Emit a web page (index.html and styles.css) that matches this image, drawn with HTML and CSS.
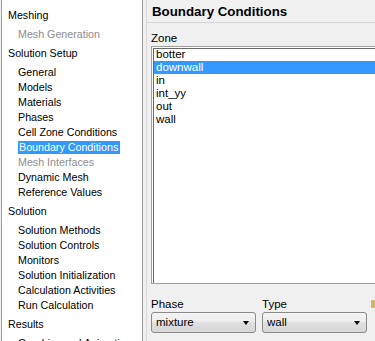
FILE: index.html
```html
<!DOCTYPE html>
<html lang="en">
<head>
    <meta charset="UTF-8">
    <meta name="viewport" content="width=device-width, initial-scale=1.0">
    <title>Boundary Conditions</title>
    <link rel="stylesheet" href="styles.css">
</head>
<body>
    <!-- Navigation tree -->
    <div class="nav">
        <div class="group">Meshing</div>
        <div class="item disabled">Mesh Generation</div>
        <div class="group">Solution Setup</div>
        <div class="item">General</div>
        <div class="item">Models</div>
        <div class="item">Materials</div>
        <div class="item">Phases</div>
        <div class="item">Cell Zone Conditions</div>
        <div class="item"><span class="selected">Boundary Conditions</span></div>
        <div class="item disabled">Mesh Interfaces</div>
        <div class="item">Dynamic Mesh</div>
        <div class="item">Reference Values</div>
        <div class="group">Solution</div>
        <div class="item">Solution Methods</div>
        <div class="item">Solution Controls</div>
        <div class="item">Monitors</div>
        <div class="item">Solution Initialization</div>
        <div class="item">Calculation Activities</div>
        <div class="item">Run Calculation</div>
        <div class="group">Results</div>
        <div class="item">Graphics and Animations</div>
    </div>

    <!-- Task page -->
    <div class="panel">
        <div class="panel-title">Boundary Conditions</div>
        <div class="panel-body">
            <div class="label">Zone</div>
            <div class="listbox">
                <div class="option">botter</div>
                <div class="option active">downwall</div>
                <div class="option">in</div>
                <div class="option">int_yy</div>
                <div class="option">out</div>
                <div class="option">wall</div>
            </div>
            <div class="fields">
                <div class="field">
                    <div class="label">Phase</div>
                    <div class="combo">mixture<span class="arrow"></span></div>
                </div>
                <div class="field">
                    <div class="label">Type</div>
                    <div class="combo">wall<span class="arrow"></span></div>
                </div>
                <div class="edge-icon"></div>
            </div>
        </div>
    </div>
</body>
</html>
```

FILE: styles.css
```css
body {
    margin: 0;
    padding: 0 0 0 1px;
    height: 341px;
    overflow: hidden;
    display: flex;
    background: #f0f0f0;
    font-family: "Liberation Sans", Arial, sans-serif;
    color: #000;
}
.nav {
    flex: 0 0 140px;
    background: #fff;
    border-left: 1px solid #a0a0a0;
    border-right: 1px solid #a0a0a0;
    padding-top: 4px;
    font-size: 10.7px;
    line-height: 15px;
    white-space: nowrap;
    overflow: hidden;
}
.group {
    padding: 4px 0 4px 6px;
}
.item {
    padding-left: 16px;
}
.item.disabled {
    color: #8d8d8d;
}
.selected {
    background: #3399ff;
    color: #fff;
    padding: 0 2px 0 1px;
    display: inline-block;
    line-height: 13px;
    margin: 1px 0;
}
.panel {
    flex: 1;
    margin-left: 3px;
    border-left: 1px solid #d9d9d9;
    overflow: hidden;
    min-width: 0;
}
.panel-title {
    height: 20px;
    padding: 2px 0 0 5px;
    line-height: 20px;
    font-size: 13.3px;
    font-weight: bold;
    border-bottom: 1px solid #d6d6d6;
}
.panel-body {
    padding-left: 4px;
}
.label {
    font-size: 11.5px;
    line-height: 14px;
}
.panel-body > .label {
    margin-top: 8px;
}
.listbox {
    margin-top: 1px;
    width: 240px;
    height: 238px;
    box-sizing: border-box;
    background: #fff;
    border: 1px solid #a0a0a0;
    box-shadow: inset 1px 1px 0 #fff, inset 2px 2px 0 #696969;
    padding: 1px 0 0 2px;
    font-size: 11.5px;
    line-height: 13px;
}
.option {
    padding-left: 2px;
}
.option.active {
    background: #3399ff;
    color: #fff;
}
.fields {
    display: flex;
    gap: 6px;
    margin-top: 13px;
}
.field {
    width: 106px;
}
.combo {
    position: relative;
    margin-top: 1px;
    height: 21px;
    box-sizing: border-box;
    border: 1px solid #8a8a8a;
    border-radius: 3px;
    background: linear-gradient(#f4f4f4, #ececec 50%, #e0e0e0 50%, #d6d6d6);
    padding-left: 4px;
    font-size: 11.5px;
    line-height: 19px;
}
.arrow {
    position: absolute;
    right: 6px;
    top: 8px;
    width: 0;
    height: 0;
    border-left: 3.5px solid transparent;
    border-right: 3.5px solid transparent;
    border-top: 4px solid #000;
}
.edge-icon {
    width: 4px;
    height: 8px;
    margin-top: 3px;
    margin-left: -2px;
    background: #d4b468;
    border-radius: 1px;
}
```
